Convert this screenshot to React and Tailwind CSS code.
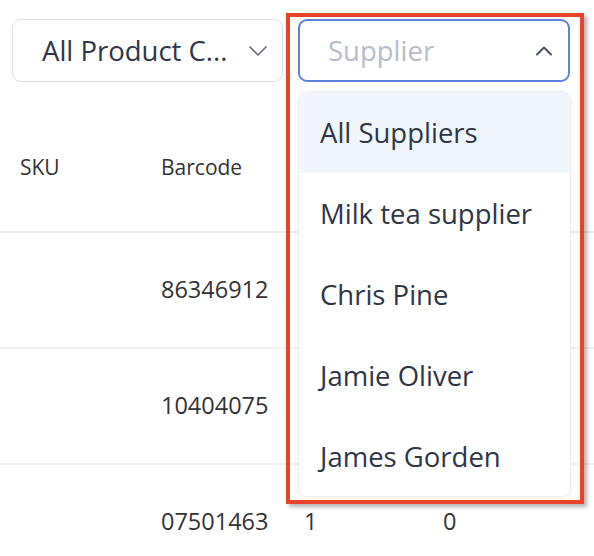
import { ChevronDown, ChevronUp } from 'lucide-react';

const rows = [
  { sku: '', barcode: '86346912', stock: '', reorder: '' },
  { sku: '', barcode: '10404075', stock: '', reorder: '' },
  { sku: '', barcode: '07501463', stock: '1', reorder: '0' },
];

const suppliers = ['All Suppliers', 'Milk tea supplier', 'Chris Pine', 'Jamie Oliver', 'James Gorden'];

const App = () => {
  return (
    <div className="relative w-[594px] h-[556px] overflow-hidden bg-white font-['Open_Sans',sans-serif]">
      {/* Filters */}
      <div className="flex gap-[15px] pl-[12px] pt-[19px]">
        <div className="w-[271px] h-[63px] rounded-[9px] border-[1.5px] border-[#dde2ea] flex items-center justify-between pl-[29px] pr-[8px]">
          <span className="text-[27.5px] text-[#2f3646] whitespace-nowrap">All Product C...</span>
          <ChevronDown className="w-[32px] h-[32px] text-[#6b7280]" strokeWidth={1.3} />
        </div>
        <div className="w-[272px] h-[63px] rounded-[9px] border-2 border-[#5b82d9] flex items-center justify-between pl-[28px] pr-[10px]">
          <span className="text-[27.5px] text-[#b7bdcb]">Supplier</span>
          <ChevronUp className="w-[28px] h-[28px] text-[#4b5262]" strokeWidth={1.7} />
        </div>
      </div>

      {/* Table */}
      <div className="mt-[23px] text-[#333]">
        <div className="grid grid-cols-[161px_143px_139px_1fr] h-[128px] items-center border-b-2 border-[#e8edf2] text-[21px]">
          <div className="pl-[20px]">SKU</div>
          <div>Barcode</div>
          <div />
          <div />
        </div>
        {rows.map((r) => (
          <div
            key={r.barcode}
            className="grid grid-cols-[161px_143px_139px_1fr] h-[116px] items-center border-b-2 border-[#f1f2f4] text-[23.5px]"
          >
            <div className="pl-[20px]">{r.sku}</div>
            <div>{r.barcode}</div>
            <div>{r.stock}</div>
            <div>{r.reorder}</div>
          </div>
        ))}
      </div>

      {/* Supplier dropdown menu */}
      <div className="absolute left-[298px] top-[91px] w-[273px] h-[406px] bg-white rounded-[9px] border border-[#eeeff2] shadow-[0_2px_6px_rgba(0,0,0,0.06)] overflow-hidden">
        {suppliers.map((s, i) => (
          <div
            key={s}
            className={`h-[81px] flex items-center pl-[21px] text-[27.5px] text-[#2f3646] ${i === 0 ? 'bg-[#f1f6fd]' : ''}`}
          >
            {s}
          </div>
        ))}
      </div>

      {/* Highlight annotation */}
      <div className="absolute left-[286px] top-[13px] w-[298px] h-[491px] border-[4.5px] border-[#e8432b] shadow-[3px_3px_4px_rgba(0,0,0,0.3)] pointer-events-none" />
    </div>
  );
};

export default App;
